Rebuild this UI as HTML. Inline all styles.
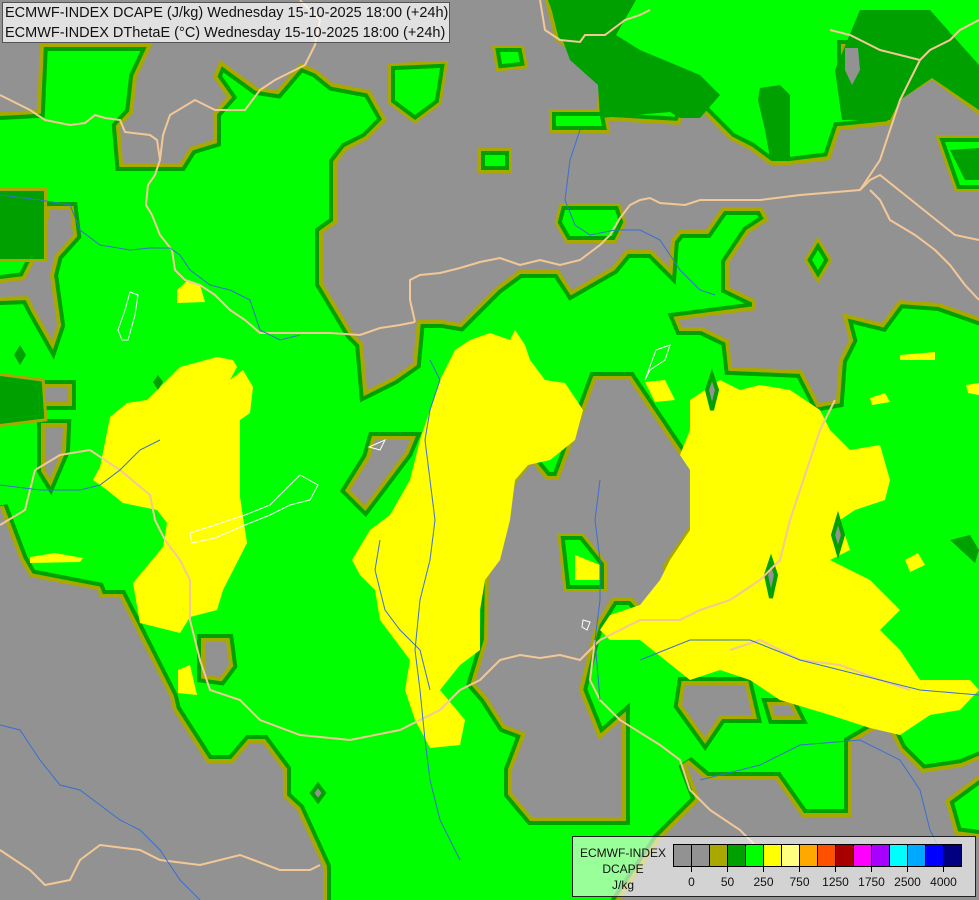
<!DOCTYPE html>
<html><head><meta charset="utf-8"><style>
html,body{margin:0;padding:0;width:979px;height:900px;overflow:hidden;background:#00ff00;}
svg{position:absolute;left:0;top:0;}
.t{position:absolute;left:2px;top:2px;width:448px;height:41px;background:rgba(255,255,255,0.72);border:1px solid #555;font-family:"Liberation Sans",sans-serif;font-size:14.5px;color:#111;line-height:20px;padding-left:2px;box-sizing:border-box;white-space:nowrap;overflow:hidden;}
.lg{position:absolute;left:572px;top:836px;width:404px;height:61px;background:rgba(255,255,255,0.6);border:1px solid #222;box-sizing:border-box;font-family:"Liberation Sans",sans-serif;font-size:12px;color:#111;}
</style></head><body>
<svg width="979" height="900" viewBox="0 0 979 900">
<defs>
<g id="gray">
<path d="M0,0 L545,0 L555,40 L590,65 L600,80 L595,120 L680,125 L690,100 L730,140 L750,150 L770,165 L790,165 L830,160 L840,130 L890,125 L900,100 L932,80 L979,115 L979,317 L939,303 L899,300 L882,323 L842,313 L849,340 L839,360 L836,400 L819,403 L802,370 L732,367 L729,340 L702,327 L682,327 L679,320 L756,310 L756,300 L729,287 L729,263 L749,233 L769,220 L762,207 L722,207 L706,230 L679,230 L671,240 L669,267 L652,250 L626,250 L612,267 L572,290 L559,270 L519,270 L496,287 L460,323 L443,320 L417,320 L413,363 L393,377 L367,390 L363,343 L353,333 L323,283 L323,233 L337,223 L337,163 L347,150 L367,140 L387,120 L370,90 L333,83 L317,70 L300,63 L277,90 L257,87 L220,60 L213,77 L227,97 L213,113 L213,140 L190,147 L180,163 L123,163 L120,127 L133,113 L137,77 L153,43 L40,43 L37,110 L0,112 Z"/>
<path d="M596,380 L629,380 L676,450 L689,467 L689,527 L662,567 L676,590 L646,613 L632,597 L612,597 L596,623 L592,637 L579,690 L599,740 L622,720 L622,817 L532,817 L512,793 L512,770 L526,733 L505,725 L487,697 L475,683 L488,640 L489,567 L516,483 L532,463 L546,480 L559,480 Z"/>
<path d="M375,440 L410,440 L405,452 L365,505 L350,490 L370,458 Z"/>
<path d="M0,507 L20,560 L30,577 L97,590 L100,598 L120,598 L170,697 L173,710 L207,763 L233,763 L250,743 L263,743 L283,770 L283,797 L297,810 L323,867 L323,900 L0,900 Z"/>
<path d="M50,210 L70,210 L73,235 L55,255 L50,275 L57,325 L52,340 L35,310 L28,296 L0,297 L0,283 L25,280 L45,240 Z"/>
<path d="M45,427 L63,427 L62,450 L50,478 L45,470 Z"/>
<path d="M45,388 L68,388 L68,402 L45,402 Z"/>
<path d="M686,763 L706,780 L776,780 L802,817 L852,817 L852,743 L886,723 L899,750 L922,773 L962,767 L979,760 L979,775 L945,800 L955,835 L979,838 L979,900 L620,900 L660,840 L700,800 Z"/>
<path d="M685,685 L745,685 L752,715 L720,715 L705,737 L682,705 Z"/>
<path d="M772,706 L790,706 L795,716 L775,716 Z"/>
<path d="M205,642 L226,642 L229,665 L220,677 L205,675 Z"/>
<path d="M845,48 L858,48 L860,70 L852,85 L845,70 Z"/>
</g>
<g id="isl">
<path d="M395,70 L440,68 L435,100 L415,115 L395,100 Z"/>
<path d="M500,52 L518,52 L520,62 L502,64 Z"/>
<path d="M556,116 L600,116 L602,126 L556,126 Z"/>
<path d="M485,155 L505,155 L505,166 L485,166 Z"/>
<path d="M565,210 L615,210 L619,222 L612,236 L570,236 L562,222 Z"/>
<path d="M818,250 L824,260 L818,270 L812,260 Z"/>
<path d="M945,142 L979,142 L979,185 L960,185 Z"/>
<path d="M0,195 L40,195 L40,255 L0,255 Z"/>
<path d="M0,380 L38,385 L40,415 L0,420 Z"/>
<path d="M565,540 L580,540 L600,565 L600,585 L570,585 Z"/>
</g>
</defs>
<use href="#gray" fill="none" stroke="#00a000" stroke-width="16" stroke-linejoin="miter"/>
<use href="#gray" fill="none" stroke="#a8a800" stroke-width="8" stroke-linejoin="miter"/>
<use href="#gray" fill="#929292"/>
<use href="#isl" fill="none" stroke="#a8a800" stroke-width="14"/>
<use href="#isl" fill="none" stroke="#00a000" stroke-width="8"/>
<use href="#isl" fill="#00ff00"/>
<path d="M548,0 L636,0 L616,35 L640,50 L700,75 L720,95 L700,118 L680,118 L670,112 L600,118 L598,85 L570,60 Z" fill="#00a000"/>
<path d="M760,88 L780,85 L790,95 L790,160 L770,158 L765,130 L758,100 Z" fill="#00a000"/>
<path d="M860,10 L930,10 L979,65 L979,110 L932,78 L900,100 L890,120 L842,120 L835,70 Z" fill="#00a000"/>
<path d="M845,48 L858,48 L860,70 L852,85 L845,70 Z" fill="#929292"/>
<path d="M0,380 L38,385 L40,415 L0,420 Z" fill="#00a000"/>
<path d="M0,195 L40,195 L40,255 L0,255 Z" fill="#00a000"/>
<path d="M950,150 L979,148 L979,180 L965,180 Z" fill="#00a000"/>
<path d="M950,540 L970,535 L979,550 L975,563 Z" fill="#00a000"/>
<g fill="#ffff00">
<path d="M110,417 L127,403 L147,400 L180,367 L217,357 L233,360 L237,367 L230,380 L243,370 L253,387 L250,413 L240,420 L240,497 L247,543 L223,590 L217,610 L190,617 L180,633 L140,623 L133,583 L163,547 L167,523 L157,510 L123,503 L107,490 L93,480 L100,467 Z"/>
<path d="M30,557 L55,553 L83,558 L80,562 L30,563 Z"/>
<path d="M178,670 L190,665 L197,695 L178,693 Z"/>
<path d="M177,290 L188,280 L200,285 L205,302 L177,303 Z"/>
<path d="M470,340 L490,333 L510,340 L515,330 L525,345 L530,360 L545,380 L565,383 L583,410 L575,440 L550,460 L528,465 L515,480 L510,520 L500,560 L485,580 L480,610 L480,650 L460,665 L440,690 L465,720 L460,745 L430,748 L415,720 L405,690 L410,660 L380,620 L375,590 L360,575 L352,560 L370,530 L390,515 L410,480 L420,440 L430,410 L440,380 L455,350 Z"/>
<path d="M690,400 L720,380 L740,390 L760,385 L790,390 L820,410 L830,430 L850,450 L880,445 L890,480 L885,500 L855,510 L840,520 L850,550 L830,560 L870,580 L900,610 L880,630 L900,650 L920,680 L970,680 L979,690 L960,710 L930,715 L900,735 L870,728 L830,715 L780,700 L750,680 L720,670 L690,680 L665,660 L640,640 L610,640 L600,630 L610,615 L640,605 L660,580 L670,560 L690,530 L690,470 L680,455 L690,430 Z"/>
<path d="M645,382 L665,380 L675,400 L655,402 Z"/>
<path d="M900,355 L935,352 L935,360 L900,360 Z"/>
<path d="M870,398 L885,393 L890,402 L872,405 Z"/>
<path d="M905,560 L918,553 L925,565 L910,572 Z"/>
<path d="M966,385 L979,383 L979,395 L968,393 Z"/>
</g>
<g fill="#929292" stroke="#00a000" stroke-width="4">
<path d="M771,560 L776,575 L771,598 L766,575 Z"/>
<path d="M838,518 L843,535 L838,552 L833,535 Z"/>
<path d="M712,375 L717,390 L712,410 L707,390 Z"/>
<path d="M318,785 L324,793 L318,801 L312,793 Z"/>
</g>
<path d="M20,345 L26,355 L20,365 L14,355 Z" fill="#00a000"/>
<path d="M158,375 L163,382 L158,390 L153,382 Z" fill="#00a000"/>
<path d="M575,555 L600,565 L600,580 L575,580 Z" fill="#ffff00"/>
<g fill="none" stroke="#f2c896" stroke-width="2">
<path d="M0,95 L30,110 L45,120 L70,125 L85,123 L95,115 L105,118 L120,120 L125,132 L150,135 L157,140 L160,160 L155,175 L148,185 L146,205 L152,215 L160,235 L172,250 L175,270 L185,280 L200,285 L215,295 L230,310 L245,320 L260,333 L290,333 L330,333 L360,335 L380,328 L400,325 L415,322"/>
<path d="M415,322 L410,300 L410,280 L420,275 L440,273 L460,268 L480,262 L500,258 L520,265 L540,260 L560,265 L580,260 L600,245 L610,235 L620,218 L630,205 L640,200 L650,198 L660,203 L685,205 L700,200 L720,200 L760,200 L800,195 L860,190 L870,180 L880,175 L905,195 L930,215 L955,235 L979,240"/>
<path d="M300,0 L320,20 L315,45 L305,65 L275,80 L260,90 L245,110 L215,110 L195,100 L170,115 L163,135 L160,160"/>
<path d="M540,0 L545,30 L560,40 L580,42 L585,35 L605,35 L625,20 L640,15 L650,10"/>
<path d="M830,30 L850,35 L870,45 L880,50 L900,55 L920,60 L930,50 L950,40 L960,30 L979,20"/>
<path d="M860,190 L880,160 L890,130 L900,100 L910,80 L920,60"/>
<path d="M870,190 L880,200 L890,220 L915,235 L935,250 L950,265 L965,285 L979,300"/>
<path d="M0,525 L25,510 L35,470 L60,455 L90,450 L120,470 L150,495 L155,520 L165,540 L180,560 L190,580 L190,620 L200,660 L210,690 L240,700 L260,720 L300,735 L350,740 L400,730 L440,710 L460,690 L480,680 L500,660 L520,655 L540,658 L560,655 L580,660 L600,640 L620,630 L640,620 L680,620 L700,610 L730,600 L760,580 L780,560 L790,520 L800,490 L810,460 L820,430 L835,400"/>
<path d="M0,850 L30,870 L45,885 L70,880 L80,860 L100,845 L140,850 L160,860 L200,865 L240,855 L280,870 L310,870 L320,865"/>
<path d="M595,640 L590,680 L600,700 L620,720 L660,745 L680,760 L690,790 L710,810 L740,830 L760,850"/>
<path d="M730,650 L760,640 L800,660 L840,665 L880,680 L910,690"/>
</g>
<g fill="none" stroke="#3a6fd0" stroke-width="1">
<path d="M0,195 L40,200 L70,205 L80,230 L100,245 L130,250 L150,248 L170,248 L180,255 L190,270 L210,285 L230,290 L250,300 L260,330 L280,340 L300,335"/>
<path d="M580,130 L570,160 L565,200 L575,225 L590,235 L615,230 L640,230 L660,240 L680,270 L700,290 L715,295"/>
<path d="M0,485 L40,490 L80,490 L100,485 L120,470 L140,450 L160,440"/>
<path d="M430,360 L440,380 L430,410 L425,440 L430,480 L435,520 L430,560 L420,600 L415,650 L420,690 L425,740 L430,780 L440,820 L460,860"/>
<path d="M380,540 L375,570 L385,610 L400,630 L420,650 L430,690"/>
<path d="M0,725 L20,730 L40,760 L60,785 L80,790 L100,805 L120,820 L140,830 L160,850 L180,880 L200,900"/>
<path d="M600,480 L595,520 L600,560 L600,600 L595,640 L600,700"/>
<path d="M640,660 L690,640 L750,640 L800,660 L840,670 L880,680 L920,690 L979,695"/>
<path d="M700,780 L760,765 L800,745 L860,740 L900,760 L920,790 L930,830 L945,860"/>
</g>
<g fill="none" stroke="#fff" stroke-width="1">
<path d="M130,292 L138,295 L135,315 L128,340 L122,340 L118,330 L125,310 Z"/>
<path d="M300,475 L318,485 L310,500 L290,505 L270,515 L245,525 L215,538 L192,543 L190,533 L215,525 L245,515 L270,505 Z"/>
<path d="M369,447 L385,440 L380,450 Z"/>
<path d="M656,350 L670,345 L665,360 L650,370 L645,380 Z"/>
<path d="M583,620 L590,622 L587,630 L582,627 Z"/>
</g>
</svg>
<div class="t">ECMWF-INDEX DCAPE (J/kg) Wednesday 15-10-2025 18:00 (+24h)<br>ECMWF-INDEX DThetaE (°C) Wednesday 15-10-2025 18:00 (+24h)</div>
<div class="lg">
<div style="position:absolute;left:0;width:100px;top:8px;text-align:center;line-height:16px;">ECMWF-INDEX<br>DCAPE<br>J/kg</div>
<svg width="404" height="61" style="position:absolute;left:-1px;top:-1px;">
<g stroke="#000" stroke-width="1">
<rect x="101.5" y="8.5" width="18" height="22" fill="#929292"/>
<rect x="119.5" y="8.5" width="18" height="22" fill="#929292"/>
<rect x="137.5" y="8.5" width="18" height="22" fill="#a8a800"/>
<rect x="155.5" y="8.5" width="18" height="22" fill="#00a000"/>
<rect x="173.5" y="8.5" width="18" height="22" fill="#00ff00"/>
<rect x="191.5" y="8.5" width="18" height="22" fill="#ffff00"/>
<rect x="209.5" y="8.5" width="18" height="22" fill="#ffff80"/>
<rect x="227.5" y="8.5" width="18" height="22" fill="#ffa800"/>
<rect x="245.5" y="8.5" width="18" height="22" fill="#ff5000"/>
<rect x="263.5" y="8.5" width="18" height="22" fill="#a80000"/>
<rect x="281.5" y="8.5" width="18" height="22" fill="#ff00ff"/>
<rect x="299.5" y="8.5" width="18" height="22" fill="#a800ff"/>
<rect x="317.5" y="8.5" width="18" height="22" fill="#00ffff"/>
<rect x="335.5" y="8.5" width="18" height="22" fill="#00a8ff"/>
<rect x="353.5" y="8.5" width="18" height="22" fill="#0000ff"/>
<rect x="371.5" y="8.5" width="18" height="22" fill="#000080"/>
<path d="M119.5,30 V36 M155.5,30 V36 M191.5,30 V36 M227.5,30 V36 M263.5,30 V36 M299.5,30 V36 M335.5,30 V36 M371.5,30 V36"/>
</g>
<g font-family="Liberation Sans, sans-serif" font-size="12" fill="#111" text-anchor="middle">
<text x="119.5" y="50">0</text><text x="155.5" y="50">50</text><text x="191.5" y="50">250</text><text x="227.5" y="50">750</text><text x="263.5" y="50">1250</text><text x="299.5" y="50">1750</text><text x="335.5" y="50">2500</text><text x="371.5" y="50">4000</text>
</g>
</svg>
</div>
</body></html>
